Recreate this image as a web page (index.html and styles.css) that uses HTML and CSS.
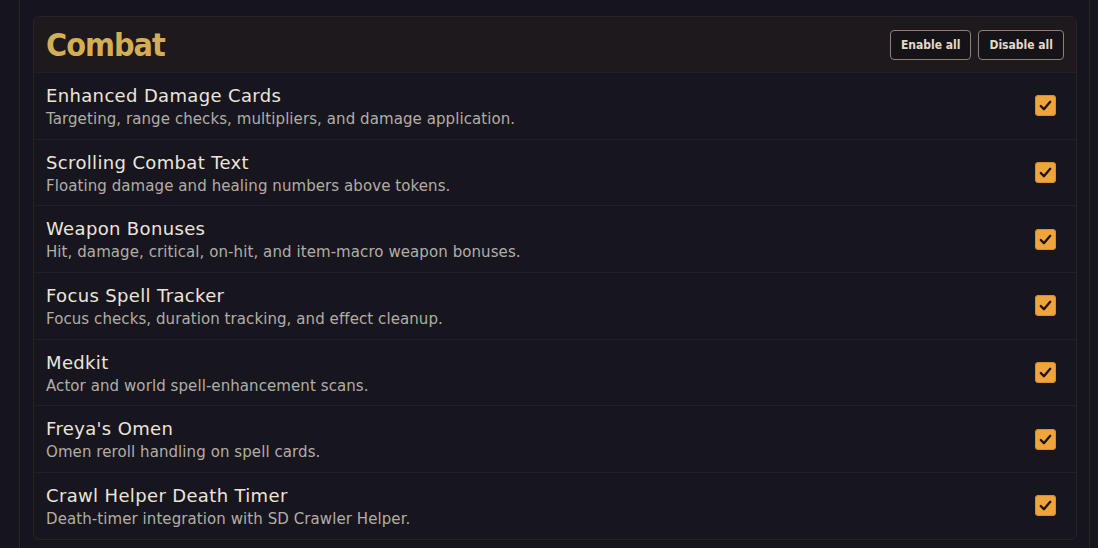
FILE: index.html
```html
<!DOCTYPE html>
<html>
<head>
<meta charset="utf-8">
<link rel="stylesheet" href="styles.css">
</head>
<body>
<div class="panel">
  <section class="card">
    <header class="card-head">
      <h2 class="card-title">Combat</h2>
      <div class="actions">
        <button class="btn">Enable all</button>
        <button class="btn">Disable all</button>
      </div>
    </header>
    <div class="row">
      <div class="text"><div class="name">Enhanced Damage Cards</div><div class="desc">Targeting, range checks, multipliers, and damage application.</div></div>
      <span class="check"><svg viewBox="0 0 20 20"><path d="M5.5 10.5l3 3 6-7"/></svg></span>
    </div>
    <div class="row">
      <div class="text"><div class="name">Scrolling Combat Text</div><div class="desc">Floating damage and healing numbers above tokens.</div></div>
      <span class="check"><svg viewBox="0 0 20 20"><path d="M5.5 10.5l3 3 6-7"/></svg></span>
    </div>
    <div class="row">
      <div class="text"><div class="name">Weapon Bonuses</div><div class="desc">Hit, damage, critical, on-hit, and item-macro weapon bonuses.</div></div>
      <span class="check"><svg viewBox="0 0 20 20"><path d="M5.5 10.5l3 3 6-7"/></svg></span>
    </div>
    <div class="row">
      <div class="text"><div class="name">Focus Spell Tracker</div><div class="desc">Focus checks, duration tracking, and effect cleanup.</div></div>
      <span class="check"><svg viewBox="0 0 20 20"><path d="M5.5 10.5l3 3 6-7"/></svg></span>
    </div>
    <div class="row">
      <div class="text"><div class="name">Medkit</div><div class="desc">Actor and world spell-enhancement scans.</div></div>
      <span class="check"><svg viewBox="0 0 20 20"><path d="M5.5 10.5l3 3 6-7"/></svg></span>
    </div>
    <div class="row">
      <div class="text"><div class="name">Freya's Omen</div><div class="desc">Omen reroll handling on spell cards.</div></div>
      <span class="check"><svg viewBox="0 0 20 20"><path d="M5.5 10.5l3 3 6-7"/></svg></span>
    </div>
    <div class="row">
      <div class="text"><div class="name">Crawl Helper Death Timer</div><div class="desc">Death-timer integration with SD Crawler Helper.</div></div>
      <span class="check"><svg viewBox="0 0 20 20"><path d="M5.5 10.5l3 3 6-7"/></svg></span>
    </div>
  </section>
</div>
</body>
</html>
```
FILE: styles.css
```css
html, body {
  margin: 0;
  padding: 0;
  background: #16151d;
  height: 100%;
  overflow: hidden;
}
body {
  font-family: "DejaVu Sans", sans-serif;
}
.panel {
  margin-left: 19px;
  width: 1071px;
  height: 100%;
  box-sizing: border-box;
  border-left: 1px solid #2a2424;
  border-right: 1px solid #2a2626;
  padding: 16px 12px 0 13px;
}
.card {
  border: 1px solid #26222a;
  border-radius: 6px;
  background: #17161f;
  overflow: hidden;
}
.card-head {
  display: flex;
  align-items: center;
  justify-content: space-between;
  height: 55px;
  padding: 0 12px 0 12px;
  background: #1d191d;
}
.card-title {
  margin: 0;
  font-family: "DejaVu Sans Condensed", "DejaVu Sans", sans-serif;
  font-weight: bold;
  font-size: 32px;
  color: #d4ae55;
  letter-spacing: -1px;
}
.actions {
  display: flex;
  gap: 7px;
}
.btn {
  height: 30px;
  padding: 0 10px;
  background: #161318;
  border: 1px solid #8e8172;
  border-radius: 4px;
  color: #e3d9c7;
  font-family: "DejaVu Sans Condensed", "DejaVu Sans", sans-serif;
  font-weight: bold;
  font-size: 12px;
}
.row {
  display: flex;
  align-items: center;
  justify-content: space-between;
  height: 66.7px;
  box-sizing: border-box;
  padding: 0 20px 0 12px;
  border-top: 1px solid #221f28;
}
.text {
  padding-top: 3px;
}
.name {
  font-size: 18px;
  line-height: 22px;
  letter-spacing: 0.35px;
  color: #ebe5db;
}
.desc {
  margin-top: 2px;
  font-size: 15px;
  line-height: 21px;
  letter-spacing: 0.08px;
  color: #b3ada5;
}
.check {
  width: 21px;
  height: 21px;
  border-radius: 4px;
  background: #f0a43c;
  box-shadow: inset 0 0 0 1px #d98e2a;
  display: flex;
}
.check svg {
  width: 21px;
  height: 21px;
  fill: none;
  stroke: #1c1408;
  stroke-width: 2.2;
  stroke-linecap: round;
  stroke-linejoin: round;
}
```
